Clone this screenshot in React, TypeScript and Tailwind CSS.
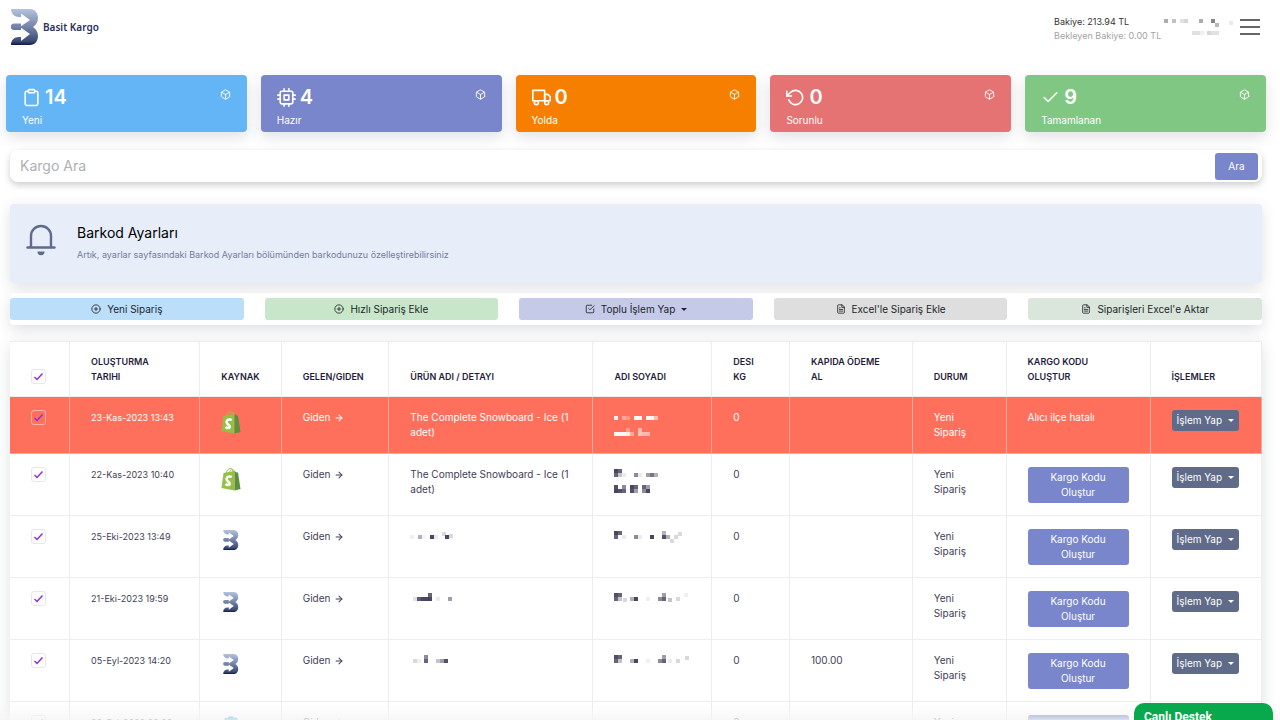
import { useId, type ReactNode } from "react";
import { ArrowRight } from "lucide-react";
import {
  FiBox,
  FiCheck,
  FiCheckSquare,
  FiClipboard,
  FiCpu,
  FiFileText,
  FiPlusCircle,
  FiRotateCcw,
  FiTruck,
} from "react-icons/fi";

// [x, y, opacity] on a 4px grid
type Block = [number, number, number];

type Order = {
  date: string;
  source: "shopify" | "basit" | "other";
  product?: string;
  productMask?: Block[];
  nameMask: Block[];
  cod?: string;
  error?: string;
};

const stats = [
  { label: "Yeni", value: 14, icon: FiClipboard, color: "bg-[#64b5f6]" },
  { label: "Hazır", value: 4, icon: FiCpu, color: "bg-[#7986cb]" },
  { label: "Yolda", value: 0, icon: FiTruck, color: "bg-[#f77f00]" },
  { label: "Sorunlu", value: 0, icon: FiRotateCcw, color: "bg-[#e57373]" },
  { label: "Tamamlanan", value: 9, icon: FiCheck, color: "bg-[#81c784]" },
];

const actions = [
  { label: "Yeni Sipariş", icon: FiPlusCircle, color: "bg-[#bbdefb]" },
  { label: "Hızlı Sipariş Ekle", icon: FiPlusCircle, color: "bg-[#c8e6c9]" },
  { label: "Toplu İşlem Yap", icon: FiCheckSquare, color: "bg-[#c5cae9]", caret: true },
  { label: "Excel'le Sipariş Ekle", icon: FiFileText, color: "bg-[#dedede]" },
  { label: "Siparişleri Excel'e Aktar", icon: FiFileText, color: "bg-[#dae5dc]" },
];

const columns = [
  { label: "", width: "w-[4.8%]" },
  { label: "OLUŞTURMA\nTARIHI", width: "w-[10.4%]" },
  { label: "KAYNAK", width: "w-[6.5%]" },
  { label: "GELEN/GIDEN", width: "w-[8.6%]" },
  { label: "ÜRÜN ADI / DETAYI", width: "w-[16.3%]" },
  { label: "ADI SOYADI", width: "w-[9.5%]" },
  { label: "DESI\nKG", width: "w-[6.2%]" },
  { label: "KAPIDA ÖDEME\nAL", width: "w-[9.8%]" },
  { label: "DURUM", width: "w-[7.5%]" },
  { label: "KARGO KODU\nOLUŞTUR", width: "w-[11.5%]" },
  { label: "İŞLEMLER", width: "w-[8.9%]" },
];

const orders: Order[] = [
  {
    date: "23-Kas-2023 13:43",
    source: "shopify",
    product: "The Complete Snowboard - Ice (1 adet)",
    error: "Alıcı ilçe hatalı",
    nameMask: [
      [0, 4, 0.9], [8, 4, 0.4], [12, 4, 0.25], [20, 4, 0.95], [24, 4, 0.95], [32, 4, 0.95], [36, 4, 0.95], [40, 4, 0.5],
      [0, 20, 0.95], [4, 20, 0.95], [8, 20, 0.95], [12, 20, 0.85], [12, 16, 0.3], [16, 20, 0.4], [24, 16, 0.5], [24, 20, 0.6], [28, 20, 0.5], [32, 20, 0.5],
    ],
  },
  {
    date: "22-Kas-2023 10:40",
    source: "shopify",
    product: "The Complete Snowboard - Ice (1 adet)",
    nameMask: [
      [0, 0, 0.95], [4, 0, 0.8], [0, 4, 0.8], [4, 4, 0.3], [8, 4, 0.1], [20, 4, 0.6], [24, 4, 0.1], [32, 4, 0.5], [36, 4, 0.7], [40, 4, 0.4],
      [0, 16, 0.9], [8, 16, 0.6], [0, 20, 0.95], [4, 20, 0.9], [8, 20, 0.8], [16, 16, 0.95], [20, 16, 0.8], [16, 20, 0.9], [20, 20, 0.5], [28, 16, 0.8], [32, 16, 0.5], [28, 20, 0.6], [32, 20, 0.95],
    ],
  },
  {
    date: "25-Eki-2023 13:49",
    source: "basit",
    productMask: [[0, 4, 0.08], [8, 4, 0.4], [12, 4, 0.05], [20, 4, 0.95], [24, 4, 0.1], [32, 1, 0.2], [35, 4, 0.95], [39, 3, 0.2]],
    nameMask: [[0, 0, 0.95], [4, 0, 0.8], [0, 4, 0.8], [8, 4, 0.1], [20, 4, 0.6], [24, 4, 0.1], [36, 4, 0.95], [48, 0, 0.4], [48, 4, 0.9], [52, 4, 0.4], [56, 8, 0.2], [60, 4, 0.2], [64, 1, 0.2]],
  },
  {
    date: "21-Eki-2023 19:59",
    source: "basit",
    productMask: [[3, 4, 0.15], [7, 4, 0.85], [11, 4, 0.95], [15, 4, 0.95], [18, 0, 0.8], [18, 4, 0.95], [26, 4, 0.1], [38, 4, 0.5]],
    nameMask: [[0, 0, 0.9], [4, 0, 0.8], [0, 4, 0.8], [4, 4, 0.3], [9, 5, 0.2], [16, 4, 0.4], [20, 4, 0.95], [32, 4, 0.08], [44, 4, 0.6], [48, 0, 0.5], [48, 4, 0.8], [54, 5, 0.3], [62, 4, 0.2], [70, 0, 0.08]],
  },
  {
    date: "05-Eyl-2023 14:20",
    source: "basit",
    cod: "100.00",
    productMask: [[3, 4, 0.2], [7, 4, 0.08], [14, 0, 0.6], [14, 4, 0.8], [26, 4, 0.3], [30, 4, 0.5], [34, 4, 0.9]],
    nameMask: [[0, 0, 0.9], [4, 0, 0.8], [0, 4, 0.8], [4, 4, 0.3], [16, 4, 0.4], [20, 4, 0.95], [32, 4, 0.08], [44, 4, 0.6], [48, 0, 0.5], [48, 4, 0.8], [54, 4, 0.1], [62, 4, 0.2], [71, 1, 0.2]],
  },
  {
    date: "20-Eyl-2023 22:22",
    source: "other",
    productMask: [[3, 4, 0.2], [14, 4, 0.6], [26, 4, 0.3]],
    nameMask: [[0, 4, 0.8], [16, 4, 0.4], [44, 4, 0.6]],
  },
];

function BrandMark({ className }: { className?: string }) {
  const id = useId();
  return (
    <svg viewBox="0 0 28 36" className={className} aria-hidden="true">
      <defs>
        <linearGradient id={id} x1="0" y1="0" x2="0" y2="1">
          <stop offset="0" stopColor="#b4c3dd" />
          <stop offset="0.5" stopColor="#7384a8" />
          <stop offset="0.9" stopColor="#3a4a72" />
          <stop offset="1" stopColor="#12164a" />
        </linearGradient>
      </defs>
      <path
        fill={`url(#${id})`}
        d="M0 0h19c5 0 8 4 8 9 0 4-2 7-5 9 3 2 5 5 5 9 0 5-3 9-8 9H0c0-5 3-8 8-8h2v4l9-7-9-6.200V21H3a3.250 3.250 0 0 1 0-6.500h7v2.700L19 11l-9-6.500V8H8C3 8 0 4 0 0z"
      />
    </svg>
  );
}

function ShopifyBag() {
  return (
    <svg viewBox="0 0 20 24" className="h-6 w-5" aria-hidden="true">
      <path d="M5 7c.5-3.500 2.500-5.500 4.500-5.500S12 3 12 6M8 6c.5-2 2-3.500 3.500-3.500S13 4 13.300 5" fill="none" stroke="#95bf47" strokeWidth="1" />
      <path d="M2.500 6 13.500 4v19.500L.5 21z" fill="#95bf47" />
      <path d="m13.500 4 1.500 1.200 2 .3L19.500 22l-6 1.500z" fill="#5e8e3e" />
      <path d="M10.800 10C8.500 8.800 5.600 9.600 5.600 12c0 2.600 3.200 2.700 3.200 4.700 0 1.700-2.500 1.800-4.300.4" fill="none" stroke="#fff" strokeWidth="2.500" />
    </svg>
  );
}

function BellIcon() {
  return (
    <svg viewBox="0 0 30 32" className="h-8 w-[30px] text-[#5f6b8c]" aria-hidden="true">
      <path d="M5 23V12a10 10 0 0 1 20 0v11" fill="none" stroke="currentColor" strokeWidth="2.400" />
      <path d="M1.500 23.500h27" fill="none" stroke="currentColor" strokeWidth="2.400" strokeLinecap="round" />
      <path d="M11.500 27.500h7a3.500 3.800 0 0 1-7 0z" fill="currentColor" />
    </svg>
  );
}

function Caret() {
  return (
    <svg viewBox="0 0 6 3" className="h-[3px] w-1.5" aria-hidden="true">
      <path d="M0 0h6L3 3z" fill="currentColor" />
    </svg>
  );
}

function Mask({ blocks }: { blocks: Block[] }) {
  return (
    <svg viewBox="0 0 76 26" className="mt-0.5 h-[26px] w-[76px] max-w-none" shapeRendering="crispEdges" aria-hidden="true">
      {blocks.map(([x, y, opacity], i) => (
        <rect key={i} x={x} y={y} width="4" height="4" fill="currentColor" opacity={opacity} />
      ))}
    </svg>
  );
}

function Tick({ label, onRed }: { label: string; onRed?: boolean }) {
  return (
    <label className="grid w-[15px] place-items-center">
      <input
        type="checkbox"
        defaultChecked
        aria-label={label}
        className={`peer col-start-1 row-start-1 h-[15px] w-[15px] appearance-none rounded-[3px] border ${onRed ? "border-[#ffb5a9]" : "border-gray-200"}`}
      />
      <svg viewBox="0 0 11 11" className="pointer-events-none invisible col-start-1 row-start-1 h-[11px] w-[11px] peer-checked:visible" aria-hidden="true">
        <path d="M1.500 6 4 8.500 9.500 2.500" fill="none" stroke="#8a2be2" strokeWidth="1.400" />
      </svg>
    </label>
  );
}

function Cell({ children, onRed }: { children?: ReactNode; onRed?: boolean }) {
  return (
    <td className={`border-r border-b px-[21px] pt-[13px] pb-3 align-top leading-[15px] ${onRed ? "border-[#ffa598]" : "border-[#ededf0]"}`}>
      {children}
    </td>
  );
}

function OrderRow({ order }: { order: Order }) {
  const red = Boolean(order.error);
  return (
    <tr className={`h-[57px] ${red ? "bg-[#ff705c] text-white" : "bg-white text-[#3f3d56]"}`}>
      <Cell onRed={red}>
        <Tick label={`Seç ${order.date}`} onRed={red} />
      </Cell>
      <Cell onRed={red}>
        <span className="block text-[9px] leading-[15px] whitespace-nowrap">{order.date}</span>
      </Cell>
      <Cell onRed={red}>
        {order.source === "shopify" && <ShopifyBag />}
        {order.source === "basit" && <BrandMark className="mt-px ml-0.5 h-5 w-4" />}
        {order.source === "other" && (
          <svg viewBox="0 0 20 20" className="h-5 w-5" aria-hidden="true">
            <path d="M7 3 8 1.500h4L13 3l3-.5 1 3 2 1v12H1v-12l2-1 1-3z" fill="#4aa8d8" />
          </svg>
        )}
      </Cell>
      <Cell onRed={red}>
        <span className="flex items-center gap-1">
          Giden <ArrowRight className="h-2.5 w-2.5" strokeWidth={2.5} />
        </span>
      </Cell>
      <Cell onRed={red}>{order.product ?? <Mask blocks={order.productMask ?? []} />}</Cell>
      <Cell onRed={red}>
        <Mask blocks={order.nameMask} />
      </Cell>
      <Cell onRed={red}>0</Cell>
      <Cell onRed={red}>{order.cod}</Cell>
      <Cell onRed={red}>Yeni Sipariş</Cell>
      <Cell onRed={red}>
        {order.error ?? (
          <button type="button" className="block w-full rounded-[3px] bg-[#7986cb] px-4 py-[3px] leading-[15px] text-white">
            Kargo Kodu Oluştur
          </button>
        )}
      </Cell>
      <Cell onRed={red}>
        <button type="button" className="flex h-[21px] items-center gap-1.5 rounded-[3px] bg-[#5f6b88] px-[5px] whitespace-nowrap text-white">
          İşlem Yap <Caret />
        </button>
      </Cell>
    </tr>
  );
}

export default function App() {
  return (
    <div className="h-screen overflow-y-auto bg-white font-['Inter','Open_Sans',sans-serif] text-[10px] leading-4 text-[#212529] [scrollbar-width:none]">
      <header className="flex h-[54px] items-center justify-between pr-5 pl-[11px]">
        <a href="#" className="flex items-center gap-1">
          <BrandMark className="h-9 w-7" />
          <span className="font-['Noto_Sans',sans-serif] font-semibold text-[#2a2e5c]">Basit Kargo</span>
        </a>
        <div className="flex items-center">
          <div className="w-[110px] pt-1 text-[9px] leading-[14px] whitespace-nowrap">
            <p className="text-[#333]">Bakiye: 213.94 TL</p>
            <p className="text-[#a3a3a3]">Bekleyen Bakiye: 0.00 TL</p>
          </div>
          <div className="text-[#333]">
            <Mask
              blocks={[
                [0, 4, 0.4], [8, 4, 0.3], [16, 4, 0.15], [20, 4, 0.2], [35, 4, 0.4], [47, 4, 0.6], [51, 8, 0.35], [65, 6, 0.1],
                [28, 16, 0.15], [32, 16, 0.15], [36, 16, 0.08], [43, 16, 0.2], [47, 16, 0.15], [51, 16, 0.15],
              ]}
            />
          </div>
          <button type="button" aria-label="Menü" className="flex w-5 flex-col gap-[5px]">
            <span className="h-0.5 bg-[#666]" />
            <span className="h-0.5 bg-[#666]" />
            <span className="h-0.5 bg-[#666]" />
          </button>
        </div>
      </header>

      <section className="mt-[21px] grid grid-cols-5 gap-3.5 pr-3.5 pl-1.5">
        {stats.map(({ label, value, icon: Icon, color }) => (
          <a key={label} href="#" className={`block h-[57px] rounded px-4 pt-2.5 text-white shadow-[0_5px_14px_rgba(60,70,90,0.16)] ${color}`}>
            <span className="flex h-6 items-center gap-1">
              <Icon className="h-[19px] w-[19px]" />
              <span className="text-xl leading-6 font-semibold">{value}</span>
              <FiBox className="mb-1.5 ml-auto h-[11px] w-[11px]" />
            </span>
            <span className="block leading-[22px]">{label}</span>
          </a>
        ))}
      </section>

      <main className="mr-[18px] ml-2.5">
        <form className="mt-[18px] flex h-8 items-center rounded-lg bg-white pr-1 shadow-[0_3px_7px_rgba(0,0,0,0.2)]" onSubmit={(e) => e.preventDefault()}>
          <input type="search" aria-label="Kargo Ara" placeholder="Kargo Ara" className="min-w-0 flex-1 bg-transparent px-2.5 text-sm outline-none placeholder:text-[#aeb0b3]" />
          <button type="submit" className="h-[27px] w-[43px] rounded-[3px] bg-[#7986cb] text-white">Ara</button>
        </form>

        <section className="mt-[22px] flex h-[79px] rounded bg-[#e8eef9] pl-4 shadow-[0_4px_14px_rgba(60,70,90,0.16)]">
          <div className="mt-5">
            <BellIcon />
          </div>
          <div className="ml-[21px] pt-5">
            <h2 className="text-sm leading-[17px] text-black">Barkod Ayarları</h2>
            <p className="mt-1.5 text-[9px] leading-4 text-[#727c99]">
              Artık, ayarlar sayfasındaki Barkod Ayarları bölümünden barkodunuzu özelleştirebilirsiniz
            </p>
          </div>
        </section>

        <div className="mt-2.5 grid grid-cols-5 gap-[21px] rounded bg-white py-[5px] shadow-[0_5px_14px_rgba(60,70,90,0.16)]">
          {actions.map(({ label, icon: Icon, color, caret }) => (
            <button key={label} type="button" className={`flex h-[22px] items-center justify-center gap-1.5 rounded-[3px] ${color}`}>
              <Icon className="h-2.5 w-2.5" />
              <span>{label}</span>
              {caret && <Caret />}
            </button>
          ))}
        </div>

        <div className="mt-4 border-t border-[#ededf0] shadow-[0_5px_14px_rgba(60,70,90,0.16)]">
          <table className="w-full table-fixed border-separate border-spacing-0">
            <thead>
              <tr className="bg-white text-left text-[#1f1c3a]">
                {columns.map(({ label, width }) => (
                  <th key={label} className={`border-r border-b border-[#ededf0] px-[21px] py-3 align-bottom text-[9px] leading-[15px] font-semibold whitespace-pre-line ${width}`}>
                    {label || <Tick label="Tümünü seç" />}
                  </th>
                ))}
              </tr>
            </thead>
            <tbody>
              {orders.map((order) => (
                <OrderRow key={order.date} order={order} />
              ))}
            </tbody>
          </table>
        </div>
      </main>

      <div className="pointer-events-none fixed inset-x-0 bottom-0 h-4 bg-linear-to-b from-white/0 to-neutral-100/80" />
      <button type="button" className="fixed right-[7px] bottom-0 h-[17px] w-[139px] overflow-hidden rounded-t-[10px] bg-[#08a84c] px-2.5 pt-1.5 text-left font-['Roboto',sans-serif] text-xs leading-4 font-bold text-white">
        Canlı Destek
      </button>
    </div>
  );
}
